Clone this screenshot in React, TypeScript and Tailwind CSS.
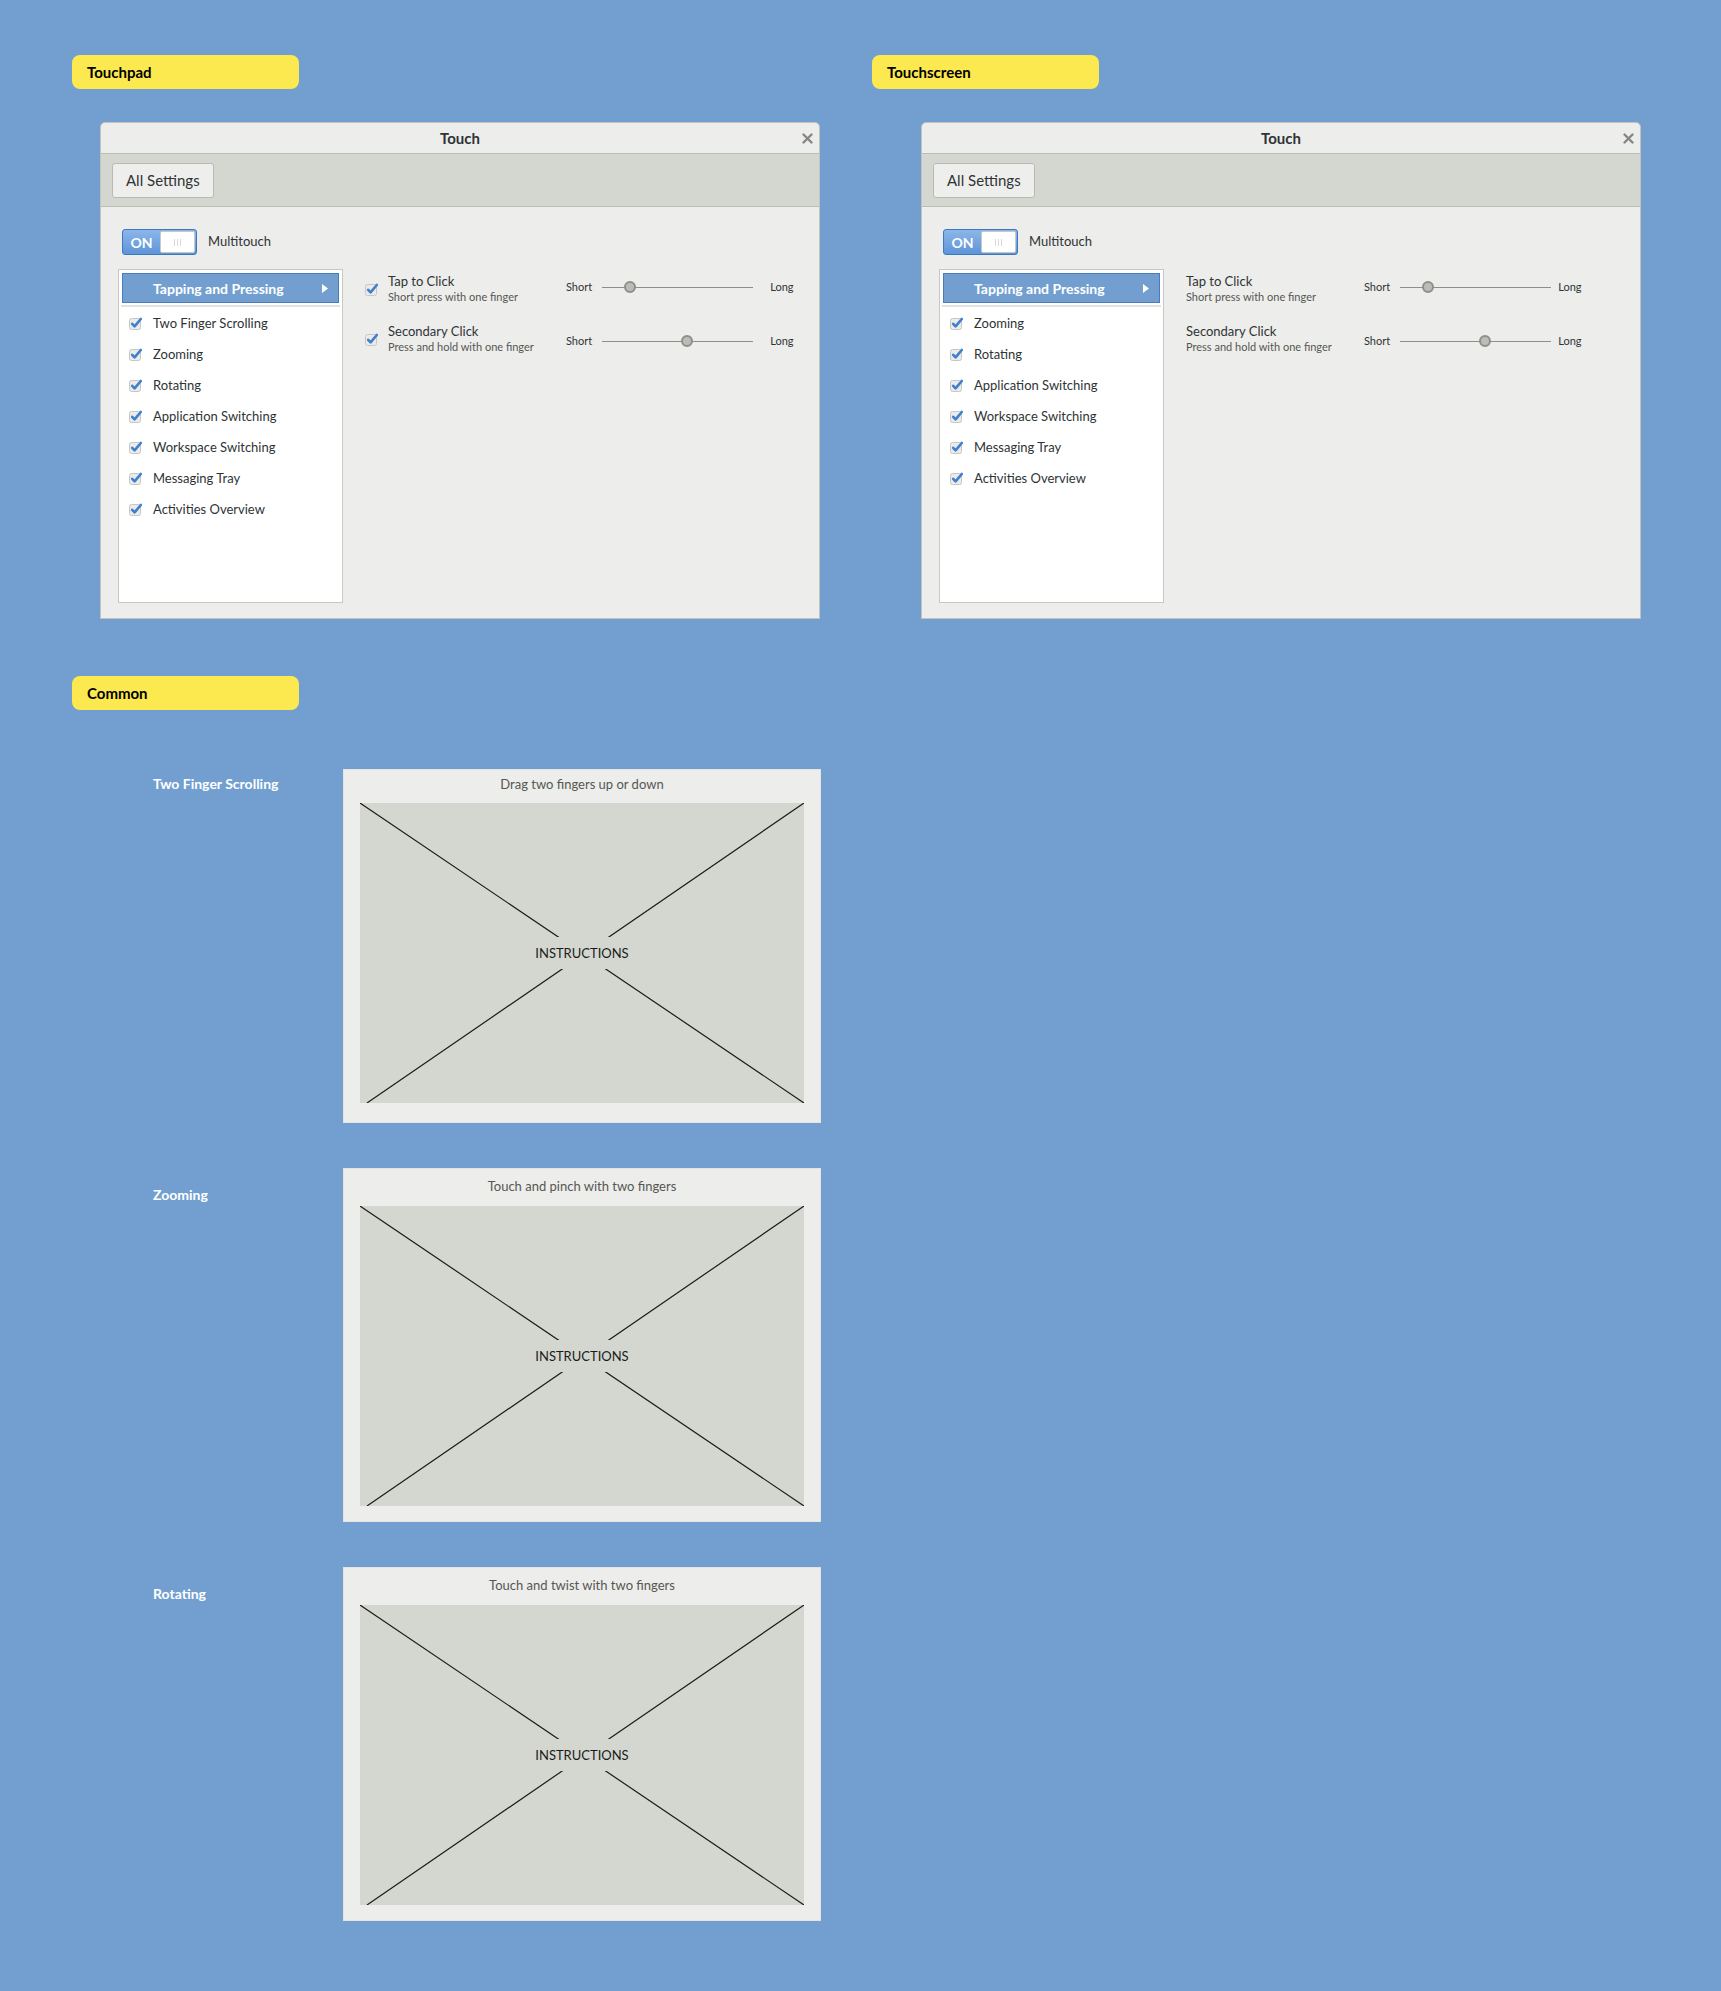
import React from "react";

type Variant = "touchpad" | "touchscreen";

const padItems = [
  "Two Finger Scrolling",
  "Zooming",
  "Rotating",
  "Application Switching",
  "Workspace Switching",
  "Messaging Tray",
  "Activities Overview",
];

const screenItems = padItems.slice(1);

const options = [
  { title: "Tap to Click", sub: "Short press with one finger", knob: 28, shift: "mb-[4px]" },
  { title: "Secondary Click", sub: "Press and hold with one finger", knob: 85, shift: "mt-[4px]" },
];

const sections = [
  { label: "Two Finger Scrolling", caption: "Drag two fingers up or down", first: true },
  { label: "Zooming", caption: "Touch and pinch with two fingers", first: false },
  { label: "Rotating", caption: "Touch and twist with two fingers", first: false },
];

function Tag({ children }: { children: React.ReactNode }) {
  return (
    <div className="flex h-[34px] w-[227px] items-center rounded-[8px] bg-[#fce94f] pl-[15px] text-[15px] font-bold text-black">
      {children}
    </div>
  );
}

function CheckBox() {
  return (
    <svg width="15" height="15" viewBox="0 0 15 15" className="shrink-0">
      <rect x="0.5" y="2.5" width="11" height="11" rx="2" fill="#ebebe9" stroke="#c6c7c3" />
      <path
        d="M3.2 7.8 L5.6 10.4 L11.8 3"
        fill="none"
        stroke="#3f7fce"
        strokeWidth="2.6"
        strokeLinecap="round"
        strokeLinejoin="round"
      />
    </svg>
  );
}

function Slider({ knob, longGap, shift }: { knob: number; longGap: string; shift: string }) {
  return (
    <div className={"flex items-center text-[11px] text-[#2e3436] " + shift}>
      <span>Short</span>
      <div className="relative ml-[10px] h-[1px] w-[151px] bg-[#8d8f8a]">
        <div
          className="absolute top-[-6px] h-[12px] w-[12px] rounded-full border-2 border-[#8d8f8a] bg-[#babdb6]"
          style={{ left: knob - 6 }}
        />
      </div>
      <span className={longGap}>Long</span>
    </div>
  );
}

function Toggle() {
  return (
    <div className="flex h-[26px] w-[75px] overflow-hidden rounded-[3px] border border-[#3c78c3] bg-linear-to-b from-[#8cb6e9] to-[#5d95d8]">
      <div className="flex w-[37px] items-center justify-center text-[14px] font-bold text-white">ON</div>
      <div className="my-[1px] mr-[1px] flex flex-1 items-center justify-center gap-[2px] rounded-[2px] border border-[#c8c9c5] bg-white">
        <span className="h-[7px] w-[1px] bg-[#d8d8d6]" />
        <span className="h-[7px] w-[1px] bg-[#d8d8d6]" />
        <span className="h-[7px] w-[1px] bg-[#d8d8d6]" />
      </div>
    </div>
  );
}

function TouchWindow({ variant }: { variant: Variant }) {
  const items = variant === "touchpad" ? padItems : screenItems;
  const checks = variant === "touchpad";

  return (
    <div className="flex h-[497px] w-[720px] flex-col overflow-hidden rounded-t-[5px] border border-[#c2c3bf] bg-[#ededeb]">
      {/* title bar */}
      <div className="relative flex h-[30px] items-center justify-center text-[15px] font-bold text-[#2e3436]">
        Touch
        <svg width="11" height="11" viewBox="0 0 11 11" className="absolute right-[6px] top-[10px]">
          <path d="M1.5 1.5 L9.5 9.5 M9.5 1.5 L1.5 9.5" stroke="#858783" strokeWidth="2.4" strokeLinecap="round" />
        </svg>
      </div>

      {/* toolbar */}
      <div className="flex h-[54px] items-center border-y border-[#bcbeb8] bg-[#d3d7cf] px-[11px]">
        <button className="h-[35px] rounded-[3px] border border-[#b9bab5] bg-[#eeeeec] px-[13px] text-[15px] text-[#2e3436]">
          All Settings
        </button>
      </div>

      {/* content */}
      <div className="flex-1 px-[17px] pt-[22px]">
        <div className="ml-[4px] flex items-center gap-[11px]">
          <Toggle />
          <span className="text-[13px] text-[#2e3436]">Multitouch</span>
        </div>

        <div className="mt-[14px] flex">
          <div className="h-[334px] w-[225px] border border-[#c8c9c5] bg-white p-[3px]">
            <div className="flex h-[30px] items-center justify-between border border-[#4a7cbc] bg-[#729fcf] pl-[30px] pr-[10px] text-[14px] font-bold text-white">
              Tapping and Pressing
              <svg width="6" height="9" viewBox="0 0 6 9">
                <path d="M0 0 L6 4.5 L0 9 Z" fill="#ffffff" />
              </svg>
            </div>
            <div className="mx-[-1px] mt-[2px] h-[2px] bg-[#e2e2e0]" />
            <div className="mt-[1px]">
              {items.map((item) => (
                <div key={item} className="flex h-[31px] items-center gap-[9px] pl-[7px] text-[13px] text-[#2e3436]">
                  <CheckBox />
                  {item}
                </div>
              ))}
            </div>
          </div>

          <div className="ml-[22px] flex flex-col gap-[10px]">
            {options.map((opt) => (
              <div key={opt.title} className="flex h-[40px] items-center">
                {checks && (
                  <div className="w-[23px]">
                    <CheckBox />
                  </div>
                )}
                <div className="w-[178px]">
                  <div className="text-[13px] leading-[16px] text-[#2e3436]">{opt.title}</div>
                  <div className="text-[11px] leading-[16px] text-[#555753]">{opt.sub}</div>
                </div>
                <Slider knob={opt.knob} shift={opt.shift} longGap={checks ? "ml-[17px]" : "ml-[7px]"} />
              </div>
            ))}
          </div>
        </div>
      </div>
    </div>
  );
}

function Instructions({ caption, first }: { caption: string; first: boolean }) {
  return (
    <div className="h-[354px] w-[478px] border border-[#e4e4e2] bg-[#ededeb] px-[16px]">
      <div
        className={
          first
            ? "pt-[5px] pb-[10px] text-center text-[13px] leading-[18px] text-[#555753]"
            : "pt-[8px] pb-[11px] text-center text-[13px] leading-[18px] text-[#555753]"
        }
      >
        {caption}
      </div>
      <div className="relative flex h-[300px] items-center justify-center bg-[#d3d7cf]">
        <svg className="absolute inset-0 h-full w-full" viewBox="0 0 445 300" preserveAspectRatio="none">
          <path d="M0 0 L445 300 M445 0 L7 300" stroke="#1b1b1b" strokeWidth="1.2" fill="none" />
        </svg>
        <span className="relative bg-[#d3d7cf] px-[6px] py-[8px] text-[13px] leading-[16px] text-[#1b1b1b]">
          INSTRUCTIONS
        </span>
      </div>
    </div>
  );
}

export default function App() {
  return (
    <div className="min-h-screen w-full bg-[#729fcf] pb-[70px] pl-[72px] pt-[55px] font-['Lato',sans-serif]">
      {/* Touchpad / Touchscreen */}
      <div className="flex">
        <div className="w-[800px]">
          <Tag>Touchpad</Tag>
          <div className="ml-[28px] mt-[33px]">
            <TouchWindow variant="touchpad" />
          </div>
        </div>
        <div>
          <Tag>Touchscreen</Tag>
          <div className="ml-[49px] mt-[33px]">
            <TouchWindow variant="touchscreen" />
          </div>
        </div>
      </div>

      {/* Common */}
      <div className="mt-[57px]">
        <Tag>Common</Tag>
        <div className="mt-[59px] flex flex-col gap-[45px]">
          {sections.map((s) => (
            <div key={s.label} className="flex">
              <div
                className={
                  s.first
                    ? "w-[271px] pl-[81px] pt-[7px] text-[14px] font-bold leading-[16px] text-white"
                    : "w-[271px] pl-[81px] pt-[19px] text-[14px] font-bold leading-[16px] text-white"
                }
              >
                {s.label}
              </div>
              <Instructions caption={s.caption} first={s.first} />
            </div>
          ))}
        </div>
      </div>
    </div>
  );
}
